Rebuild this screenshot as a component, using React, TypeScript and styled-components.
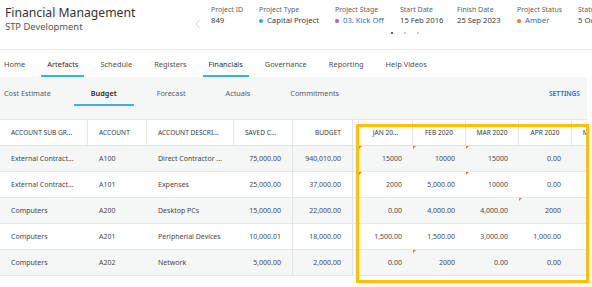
import React from "react";
import styled, { createGlobalStyle } from "styled-components";

const Global = createGlobalStyle`
  html, body { margin: 0; padding: 0; background: #fff; }
  body { font-family: "Noto Sans", "Open Sans", sans-serif; color: #555; overflow: hidden; }
  * { box-sizing: border-box; }
`;

const Page = styled.div`
  position: relative;
  width: 592px;
  height: 287px;
  overflow: hidden;
`;

const Header = styled.header`
  display: flex;
  height: 50px;
  border-bottom: 1px solid #e8e8e8;
  & > * { flex-shrink: 0; }
`;

const TitleBlock = styled.div`
  width: 193px;
  padding: 5px 0 0 5px;
  display: flex;
  flex-direction: column;
`;

const Title = styled.div`
  font-size: 12.2px;
  line-height: 16px;
  color: #333;
  white-space: nowrap;
`;

const Subtitle = styled.div`
  font-size: 9.4px;
  line-height: 12px;
  color: #555;
  white-space: nowrap;
`;

const Chevron = styled.div`
  width: 18px;
  padding: 12px 0 0 2px;
`;

const Carousel = styled.div`
  width: 390px;
  display: flex;
  flex-direction: column;
  padding-top: 5px;
`;

const InfoRow = styled.div`
  display: flex;
  white-space: nowrap;
`;

const Info = styled.div<{ $w: number }>`
  display: flex;
  flex-direction: column;
  flex: 0 0 ${(p) => p.$w}px;
`;

const Label = styled.div`
  font-size: 7px;
  line-height: 10px;
  color: #5f5f5f;
`;

const Value = styled.div<{ $link?: boolean }>`
  font-size: 7.7px;
  line-height: 11px;
  color: ${(p) => (p.$link ? "#1f6fb5" : "#3a3a3a")};
  display: flex;
  align-items: center;
  gap: 4px;
`;

const Dot = styled.span<{ $c: string }>`
  width: 4px;
  height: 4px;
  border-radius: 50%;
  background: ${(p) => p.$c};
  display: inline-block;
`;

const Pager = styled.div`
  display: flex;
  justify-content: center;
  gap: 11px;
  margin-top: 6px;
  padding-right: 2px;
`;

const PageDot = styled.span<{ $on?: boolean }>`
  width: 2px;
  height: 2px;
  border-radius: 50%;
  background: ${(p) => (p.$on ? "#333" : "#bbb")};
`;

const Nav = styled.nav`
  display: flex;
  gap: 10px;
  height: 27px;
  padding-left: 4px;
`;

const NavItem = styled.div<{ $active?: boolean }>`
  padding: 2px 6px 0;
  display: flex;
  align-items: center;
  font-size: 7.45px;
  white-space: nowrap;
  color: ${(p) => (p.$active ? "#2a2a2a" : "#4f4f4f")};
  border-bottom: 2px solid ${(p) => (p.$active ? "#35b3e6" : "transparent")};
  &:first-child { padding-left: 0; }
`;

const Content = styled.div`
  width: 587px;
  background: #f5f6f6;
`;

const SubNav = styled.div`
  display: flex;
  align-items: stretch;
  height: 29px;
  padding-left: 4px;
  padding-right: 7px;
  gap: 6px;
`;

const SubItem = styled.div<{ $active?: boolean }>`
  padding: 4px 17px 0;
  display: flex;
  align-items: center;
  font-size: 7.3px;
  white-space: nowrap;
  color: ${(p) => (p.$active ? "#2a2a2a" : "#5a5a5a")};
  font-weight: ${(p) => (p.$active ? 600 : 400)};
  border-bottom: 2px solid ${(p) => (p.$active ? "#35b3e6" : "transparent")};
  &:first-child { padding-left: 0; }
`;

const Settings = styled.div`
  margin-left: auto;
  display: flex;
  align-items: center;
  font-size: 6.6px;
  font-weight: 600;
  color: #1f6fb5;
  padding-top: 4px;
`;

const Spacer = styled.div`
  height: 13px;
`;

const Table = styled.div`
  background: #fff;
  overflow: hidden;
  width: 587px;
`;

const COLS = "88px 59px 87px 59px 60px 6px 54px 53px 53px 53px 53px";

const HeadRow = styled.div`
  display: grid;
  grid-template-columns: ${COLS};
  height: 27px;
  background: #fff;
  border-top: 1px solid #e6e6e6;
  border-bottom: 1px solid #e3e3e3;
`;

const Row = styled.div<{ $alt?: boolean }>`
  display: grid;
  grid-template-columns: ${COLS};
  height: 26px;
  background: ${(p) => (p.$alt ? "#f5f6f6" : "#fff")};
  border-bottom: 1px solid #e6e6e6;
`;

const HeadCell = styled.div<{ $align?: "left" | "right" | "center"; $gutter?: boolean }>`
  display: flex;
  align-items: center;
  justify-content: ${(p) =>
    p.$align === "right" ? "flex-end" : p.$align === "center" ? "center" : "flex-start"};
  padding: ${(p) => (p.$gutter ? "0" : "0 11px")};
  font-size: 6.6px;
  color: #3a3a3a;
  white-space: nowrap;
  overflow: hidden;
  border-right: 1px solid #e8e8e8;
`;

const Cell = styled.div<{ $align?: "left" | "right"; $divider?: boolean; $mark?: boolean }>`
  position: relative;
  display: flex;
  align-items: center;
  justify-content: ${(p) => (p.$align === "right" ? "flex-end" : "flex-start")};
  padding: 0 11px;
  font-size: 7px;
  color: #484848;
  white-space: nowrap;
  overflow: hidden;
  border-right: ${(p) => (p.$divider ? "1px solid #e3e3e3" : "none")};
  &::before {
    content: "";
    display: ${(p) => (p.$mark ? "block" : "none")};
    position: absolute;
    left: 0;
    top: 0;
    width: 0;
    height: 0;
    border-top: 3px solid #ec7a1c;
    border-right: 3px solid transparent;
  }
`;

const Highlight = styled.div`
  position: absolute;
  left: 356px;
  top: 124px;
  width: 233px;
  height: 159px;
  border: 3px solid #ffc107;
  pointer-events: none;
`;

type R = {
  sub: string;
  acc: string;
  desc: string;
  saved: string;
  budget: string;
  months: string[];
  marks: number[];
};

const rows: R[] = [
  { sub: "External Contract...", acc: "A100", desc: "Direct Contractor ...", saved: "75,000.00", budget: "940,010.00", months: ["15000", "10000", "15000", "0.00", "0.00"], marks: [0, 1, 2] },
  { sub: "External Contract...", acc: "A101", desc: "Expenses", saved: "25,000.00", budget: "37,000.00", months: ["2000", "5,000.00", "10000", "0.00", "0.00"], marks: [0, 2] },
  { sub: "Computers", acc: "A200", desc: "Desktop PCs", saved: "15,000.00", budget: "22,000.00", months: ["0.00", "4,000.00", "4,000.00", "2000", "0.00"], marks: [3] },
  { sub: "Computers", acc: "A201", desc: "Peripherial Devices", saved: "10,000.01", budget: "18,000.00", months: ["1,500.00", "1,500.00", "3,000.00", "1,000.00", "0.00"], marks: [] },
  { sub: "Computers", acc: "A202", desc: "Network", saved: "5,000.00", budget: "2,000.00", months: ["0.00", "2000", "0.00", "0.00", "0.00"], marks: [1] },
];

const info = [
  { label: "Project ID", value: "849", w: 48 },
  { label: "Project Type", value: "Capital Project", dot: "#2aabe4", w: 76 },
  { label: "Project Stage", value: "03. Kick Off", dot: "#9b5fd4", link: true, w: 65 },
  { label: "Start Date", value: "15 Feb 2016", w: 57 },
  { label: "Finish Date", value: "25 Sep 2023", w: 60 },
  { label: "Project Status", value: "Amber", dot: "#f07f1f", link: true, w: 61 },
  { label: "Status Date", value: "5 Oct 2023", w: 60 },
];

const months = ["JAN 20...", "FEB 2020", "MAR 2020", "APR 2020", "MAY 2020"];

export default function App() {
  return (
    <Page>
      <Global />
      <Header>
        <TitleBlock>
          <Title>Financial Management</Title>
          <Subtitle>STP Development</Subtitle>
        </TitleBlock>
        <Chevron>
          <svg width="6" height="10" viewBox="0 0 6 10">
            <path d="M4.5 1 L1 5 L4.5 9" fill="none" stroke="#cfcfcf" strokeWidth="1" />
          </svg>
        </Chevron>
        <Carousel>
          <InfoRow>
            {info.map((i) => (
              <Info key={i.label} $w={i.w}>
                <Label>{i.label}</Label>
                <Value $link={i.link}>
                  {i.dot && <Dot $c={i.dot} />}
                  {i.value}
                </Value>
              </Info>
            ))}
          </InfoRow>
          <Pager>
            <PageDot $on />
            <PageDot />
            <PageDot />
          </Pager>
        </Carousel>
      </Header>
      <Nav>
        <NavItem>Home</NavItem>
        <NavItem $active>Artefacts</NavItem>
        <NavItem>Schedule</NavItem>
        <NavItem>Registers</NavItem>
        <NavItem $active>Financials</NavItem>
        <NavItem>Governance</NavItem>
        <NavItem>Reporting</NavItem>
        <NavItem>Help Videos</NavItem>
      </Nav>
      <Content>
        <SubNav>
          <SubItem>Cost Estimate</SubItem>
          <SubItem $active>Budget</SubItem>
          <SubItem>Forecast</SubItem>
          <SubItem>Actuals</SubItem>
          <SubItem>Commitments</SubItem>
          <Settings>SETTINGS</Settings>
        </SubNav>
        <Spacer />
        <Table>
          <HeadRow>
            <HeadCell>ACCOUNT SUB GR...</HeadCell>
            <HeadCell>ACCOUNT</HeadCell>
            <HeadCell>ACCOUNT DESCRI...</HeadCell>
            <HeadCell>SAVED C...</HeadCell>
            <HeadCell $align="right">BUDGET</HeadCell>
            <HeadCell $gutter />
            {months.map((m) => (
              <HeadCell key={m} $align="center">{m}</HeadCell>
            ))}
          </HeadRow>
          {rows.map((r, idx) => (
            <Row key={r.acc} $alt={idx % 2 === 0}>
              <Cell>{r.sub}</Cell>
              <Cell>{r.acc}</Cell>
              <Cell>{r.desc}</Cell>
              <Cell $align="right" $divider>{r.saved}</Cell>
              <Cell $align="right" $divider>{r.budget}</Cell>
              <Cell />
              {r.months.map((v, mi) => (
                <Cell key={mi} $align="right" $mark={r.marks.includes(mi)}>{v}</Cell>
              ))}
            </Row>
          ))}
        </Table>
      </Content>
      <Highlight />
    </Page>
  );
}
